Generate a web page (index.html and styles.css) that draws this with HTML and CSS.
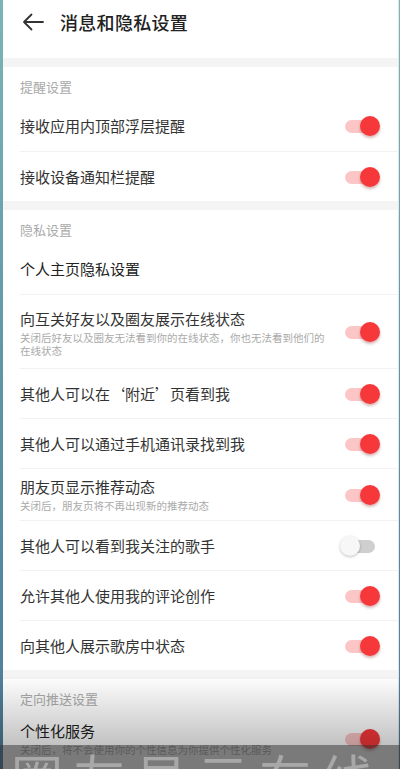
FILE: index.html
```html
<!DOCTYPE html>
<html lang="zh-CN">
<head>
    <meta charset="UTF-8">
    <meta name="viewport" content="width=device-width, initial-scale=1.0">
    <title>消息和隐私设置</title>
    <link rel="stylesheet" href="styles.css">
</head>
<body>

    <div class="page">
        <div class="header">
            <svg class="back" width="22" height="18" viewBox="0 0 22 18">
                <path d="M21 9H2M9.5 1.5L2 9l7.5 7.5" fill="none" stroke="#333" stroke-width="1.8" stroke-linecap="round" stroke-linejoin="round"/>
            </svg>
            <h1>消息和隐私设置</h1>
        </div>

        <div class="gap"></div>
        <div class="section">
            <div class="section-title">提醒设置</div>
            <div class="row">
                <div class="text"><div class="name">接收应用内顶部浮层提醒</div></div>
                <div class="switch on"></div>
            </div>
            <div class="row">
                <div class="text"><div class="name">接收设备通知栏提醒</div></div>
                <div class="switch on"></div>
            </div>
        </div>

        <div class="gap"></div>
        <div class="section">
            <div class="section-title">隐私设置</div>
            <div class="row">
                <div class="text"><div class="name dark">个人主页隐私设置</div></div>
            </div>
            <div class="row tall">
                <div class="text">
                    <div class="name">向互关好友以及圈友展示在线状态</div>
                    <div class="desc">关闭后好友以及圈友无法看到你的在线状态，你也无法看到他们的在线状态</div>
                </div>
                <div class="switch on"></div>
            </div>
            <div class="row">
                <div class="text"><div class="name">其他人可以在‘附近’页看到我</div></div>
                <div class="switch on"></div>
            </div>
            <div class="row">
                <div class="text"><div class="name">其他人可以通过手机通讯录找到我</div></div>
                <div class="switch on"></div>
            </div>
            <div class="row">
                <div class="text">
                    <div class="name">朋友页显示推荐动态</div>
                    <div class="desc">关闭后，朋友页将不再出现新的推荐动态</div>
                </div>
                <div class="switch on"></div>
            </div>
            <div class="row">
                <div class="text"><div class="name">其他人可以看到我关注的歌手</div></div>
                <div class="switch"></div>
            </div>
            <div class="row">
                <div class="text"><div class="name">允许其他人使用我的评论创作</div></div>
                <div class="switch on"></div>
            </div>
            <div class="row">
                <div class="text"><div class="name">向其他人展示歌房中状态</div></div>
                <div class="switch on"></div>
            </div>
        </div>

        <div class="gap"></div>
        <div class="section">
            <div class="section-title">定向推送设置</div>
            <div class="row">
                <div class="text">
                    <div class="name dark">个性化服务</div>
                    <div class="desc">关闭后，将不会使用你的个性信息为你提供个性化服务</div>
                </div>
                <div class="switch on"></div>
            </div>
        </div>
    </div>

    <!-- video caption shade over the bottom -->
    <div class="shade">
        <div class="fade"></div>
        <div class="caption"><span>向圈友显示在线</span></div>
    </div>

</body>
</html>
```

FILE: styles.css
```css
html, body {
    margin: 0;
    padding: 0;
    height: 100%;
    overflow: hidden;
}
body {
    font-family: "Noto Sans CJK SC", "Noto Sans", sans-serif;
    background: linear-gradient(to bottom, #7ab6b8, #5d95a6 50%, #4d7a98);
    color: #333;
}
.page {
    margin-left: 3px;
    width: 395px;
    min-height: 100%;
    background: #fff;
    border-right: 1px solid #e4e6e8;
}
.header {
    display: flex;
    align-items: center;
    height: 44px;
    padding: 0 0 14px 19px;
}
.back {
    display: block;
    margin-right: 16px;
}
.header h1 {
    margin: 0;
    font-size: 18px;
    font-weight: 500;
    color: #222;
    letter-spacing: 0.3px;
}
.gap {
    height: 9px;
    background: #f4f4f4;
}
.section {
    padding-left: 17px;
}
.section-title {
    font-size: 13px;
    line-height: 16px;
    color: #aaa;
    padding: 12px 0 6px;
}
.row {
    display: flex;
    align-items: center;
    min-height: 50px;
    padding: 0 18px 0 0;
    box-sizing: border-box;
    border-top: 1px solid #f2f2f2;
}
.section-title + .row {
    border-top: none;
}
.text {
    flex: 1;
    padding: 8px 0;
}
.row.tall {
    min-height: 74px;
}
.row.tall .text {
    padding: 14px 0 11px;
}
.name {
    font-size: 15px;
    line-height: 20px;
    color: #333;
}
.name.dark {
    color: #222;
}
.desc {
    font-size: 10.5px;
    line-height: 13px;
    color: #aaa;
    max-width: 308px;
    margin-top: 2px;
}
.switch {
    position: relative;
    width: 40px;
    height: 22px;
    flex-shrink: 0;
}
.switch::before {
    content: "";
    position: absolute;
    left: 5px;
    right: 5px;
    top: 5px;
    height: 13px;
    border-radius: 7px;
    background: #cfcfcf;
}
.switch::after {
    content: "";
    position: absolute;
    left: 0;
    top: 1px;
    width: 20px;
    height: 20px;
    border-radius: 50%;
    background: #f7f7f7;
    box-shadow: 0 1px 3px rgba(0, 0, 0, 0.25);
}
.switch.on::before {
    background: #fcc6c6;
}
.switch.on::after {
    left: auto;
    right: 0;
    background: #f7383a;
    box-shadow: 0 2px 3px rgba(120, 0, 0, 0.3);
}
.shade {
    position: absolute;
    left: 0;
    right: 0;
    bottom: 0;
    height: 94px;
    pointer-events: none;
}
.fade {
    height: 70px;
    background: linear-gradient(to bottom, rgba(0, 0, 0, 0), rgba(0, 0, 0, 0.24));
}
.caption {
    height: 24px;
    background: rgba(40, 40, 40, 0.62);
    overflow: hidden;
    white-space: nowrap;
}
.caption span {
    display: block;
    margin: 2px 0 0 -51px;
    font-size: 52px;
    line-height: 60px;
    letter-spacing: 10px;
    color: rgba(255, 255, 255, 0.35);
}
```
